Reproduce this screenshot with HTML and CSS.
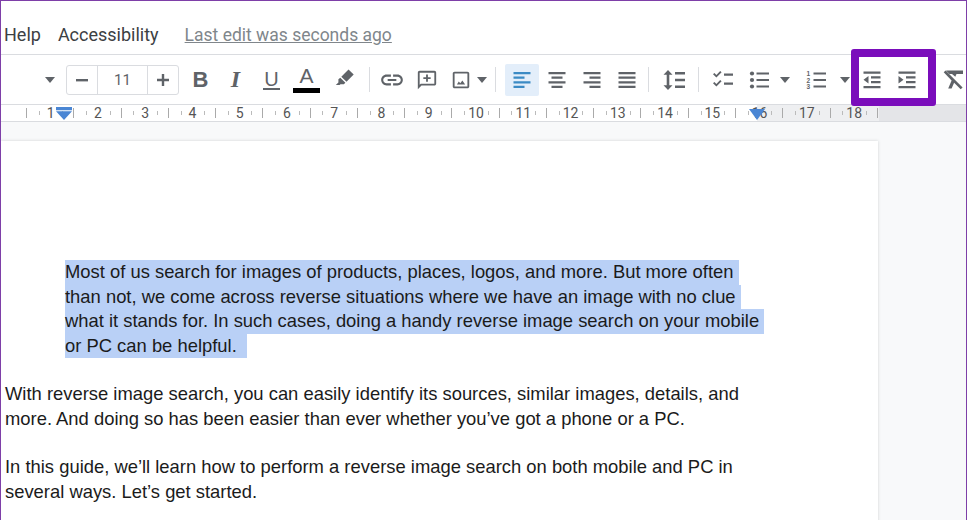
FILE: index.html
```html
<!DOCTYPE html>
<html>
<head>
    <title>Document editor</title>
    <link rel="stylesheet" href="styles.css">
</head>
<body>
    <div class="frame">
        <div class="menu-bar">
            <span class="menu-item">Help</span>
            <span class="menu-item">Accessibility</span>
            <span class="last-edit">Last edit was seconds ago</span>
        </div>

        <div class="toolbar">
            <span class="caret caret-font"></span>
            <div class="size-box">
                <span class="size-btn size-minus"><svg width="14" height="14" viewBox="0 0 14 14"><rect x="1" y="6" width="12" height="2.4"/></svg></span>
                <span class="size-value">11</span>
                <span class="size-btn size-plus"><svg width="14" height="14" viewBox="0 0 14 14"><path d="M1 5.8h4.8V1h2.4v4.8H13v2.4H8.200v4.800H5.800V8.200H1z"/></svg></span>
            </div>
            <span class="tool t-bold">B</span>
            <span class="tool t-italic">I</span>
            <span class="tool t-under"><span class="u-letter">U</span></span>
            <span class="tool t-color"><span class="a-letter">A</span><span class="a-bar"></span></span>
            <span class="tool t-marker"><svg width="20" height="20" viewBox="0 0 20 20"><path d="M13.500 1.500l5.200 5-7.200 7.300-5.200-5.100zM5.300 9.700l5.100 5-1.600 1.500H5.500l-.9.900-3.800-.1 2.600-2.600v-3.100z"/></svg></span>
            <span class="divider d1"></span>
            <span class="tool t-link"><svg width="26" height="26" viewBox="0 0 24 24"><path d="M3.900 12c0-1.710 1.390-3.100 3.100-3.100h4V7H7c-2.760 0-5 2.240-5 5s2.240 5 5 5h4v-1.900H7c-1.710 0-3.100-1.390-3.100-3.100zM8 13h8v-2H8v2zm9-6h-4v1.900h4c1.710 0 3.100 1.390 3.100 3.100s-1.390 3.100-3.100 3.100h-4V17h4c2.760 0 5-2.240 5-5s-2.240-5-5-5z"/></svg></span>
            <span class="tool t-comment"><svg width="22" height="22" viewBox="0 0 24 24"><path d="M2 4c0-1.100.9-2 2-2h16c1.100 0 2 .9 2 2v12c0 1.100-.9 2-2 2H6l-4 4zm2 0v13.170L5.170 16H20V4zm9 10h-2v-3H8V9h3V6h2v3h3v2h-3z"/></svg></span>
            <span class="tool t-image"><svg width="22" height="22" viewBox="0 0 24 24"><path d="M19 5v14H5V5h14m0-2H5c-1.100 0-2 .9-2 2v14c0 1.100.9 2 2 2h14c1.100 0 2-.9 2-2V5c0-1.100-.9-2-2-2zm-5.500 9.500l-2.300 3-1.600-1.900L7.500 17h9z"/></svg></span>
            <span class="caret caret-image"></span>
            <span class="divider d2"></span>
            <span class="tool t-align active"><svg width="20" height="20" viewBox="0 0 20 20"><path d="M1.500 2h17v2.200h-17zM1.500 6.600h11v2.200h-11zM1.500 11.200h17v2.200h-17zM1.500 15.800h11v2.200h-11z"/></svg></span>
            <span class="tool t-align"><svg width="20" height="20" viewBox="0 0 20 20"><path d="M1.500 2h17v2.200h-17zM4.500 6.600h11v2.200h-11zM1.500 11.200h17v2.200h-17zM4.500 15.800h11v2.200h-11z"/></svg></span>
            <span class="tool t-align"><svg width="20" height="20" viewBox="0 0 20 20"><path d="M1.500 2h17v2.200h-17zM7.500 6.600h11v2.200h-11zM1.500 11.200h17v2.200h-17zM7.500 15.800h11v2.200h-11z"/></svg></span>
            <span class="tool t-align"><svg width="20" height="20" viewBox="0 0 20 20"><path d="M1.500 2h17v2.200h-17zM1.500 6.600h17v2.200h-17zM1.500 11.200h17v2.200h-17zM1.500 15.800h17v2.200h-17z"/></svg></span>
            <span class="divider d3"></span>
            <span class="tool t-spacing"><svg width="24" height="24" viewBox="0 0 24 24"><path d="M6 2l4.500 4.800H7.300v10.400h3.200L6 22l-4.500-4.800h3.200V6.800H1.500zM13 4h10v2.400H13zM13 10.800h10v2.400H13zM13 17.600h10V20H13z"/></svg></span>
            <span class="divider d4"></span>
            <span class="tool t-check"><svg width="22" height="20" viewBox="0 0 22 20"><path d="M1 4.200l1.400-1.300 2 2L8.200 1l1.400 1.300-5.200 5.300zM1 13.200l1.400-1.300 2 2L8.200 10l1.400 1.300-5.200 5.300zM12 3.500h9v2.200h-9zM12 12.500h9v2.200h-9z"/></svg></span>
            <span class="tool t-bullets"><svg width="22" height="20" viewBox="0 0 22 20"><circle cx="3" cy="3.500" r="2.100"/><circle cx="3" cy="10" r="2.100"/><circle cx="3" cy="16.500" r="2.100"/><path d="M7.500 2.400H20v2.200H7.500zM7.500 8.900H20v2.200H7.500zM7.500 15.400H20v2.200H7.500z"/></svg></span>
            <span class="caret caret-bullets"></span>
            <span class="tool t-numbers"><svg width="22" height="20" viewBox="0 0 22 20"><text x="0.500" y="6" class="list-num">1</text><text x="0.500" y="12.500" class="list-num">2</text><text x="0.500" y="19" class="list-num">3</text><path d="M7.500 2.400H20v2.200H7.500zM7.500 8.900H20v2.200H7.500zM7.500 15.400H20v2.200H7.500z"/></svg></span>
            <span class="caret caret-numbers"></span>
            <span class="tool t-outdent"><svg width="20" height="20" viewBox="0 0 20 20"><path d="M1.500 1.500h17v2.200h-17zM9 6.200h9.500v2.200H9zM9 11h9.500v2.200H9zM1.500 16h17v2.200h-17zM6.500 6v7.500L1.500 9.800z"/></svg></span>
            <span class="tool t-indent"><svg width="20" height="20" viewBox="0 0 20 20"><path d="M1.500 1.500h17v2.200h-17zM9 6.200h9.500v2.200H9zM9 11h9.500v2.200H9zM1.500 16h17v2.200h-17zM1.500 6v7.500l5-3.700z"/></svg></span>
            <span class="tool t-clear"><svg width="22" height="22" viewBox="0 0 22 22"><path d="M4 1.500h17v3.400h-6.500l-1.200 2.900-3.300-2.900H7.500zM1.700 3.300L3.600 1.400l17 17-1.900 1.900-6.600-6.600-2.500 5.800H6.200l3.400-8z"/></svg></span>
        </div>

        <div class="ruler">
            <span class="ruler-grey"></span>
            <div class="ruler-ticks">
                <span>1</span><span>2</span><span>3</span><span>4</span><span>5</span><span>6</span>
                <span>7</span><span>8</span><span>9</span><span>10</span><span>11</span><span>12</span>
                <span>13</span><span>14</span><span>15</span><span>16</span><span>17</span><span>18</span>
            </div>
            <span class="marker-left"></span>
            <span class="marker-right"></span>
        </div>

        <div class="canvas">
            <div class="page">
                <p class="selected-para">
                    <span class="sel">Most of us search for images of products, places, logos, and more. But more often </span>
                    <span class="sel">than not, we come across reverse situations where we have an image with no clue </span>
                    <span class="sel">what it stands for. In such cases, doing a handy reverse image search on your mobile </span>
                    <span class="sel">or PC can be helpful.  </span>
                </p>
                <p>With reverse image search, you can easily identify its sources, similar images, details, and<br>more. And doing so has been easier than ever whether you’ve got a phone or a PC.</p>
                <p>In this guide, we’ll learn how to perform a reverse image search on both mobile and PC in<br>several ways. Let’s get started.</p>
            </div>
        </div>

        <div class="callout"></div>
    </div>
</body>
</html>
```

FILE: styles.css
```css
html, body {
    margin: 0;
    padding: 0;
}

body {
    font-family: "Liberation Sans", Arial, sans-serif;
    background-color: #fff;
}

.frame {
    position: relative;
    box-sizing: border-box;
    width: 967px;
    height: 520px;
    border: 1px solid #7e3fa8;
    border-bottom: none;
    overflow: hidden;
    display: flex;
    flex-direction: column;
}

/* menu row */
.menu-bar {
    box-sizing: border-box;
    height: 54px;
    flex: none;
    padding: 22px 0 0 3px;
    display: flex;
    align-items: flex-start;
    font-family: Roboto, sans-serif;
    font-size: 18px;
    line-height: 24px;
    color: #3c4043;
    border-bottom: 1px solid #dadce0;
}

.menu-item {
    margin-right: 17px;
}

.last-edit {
    margin-left: 9px;
    font-size: 17.500px;
    color: #80868b;
    text-decoration: underline;
}

/* toolbar */
.toolbar {
    flex: none;
    height: 49px;
    display: flex;
    align-items: center;
    padding-left: 44px;
    color: #5f6368;
    fill: #5f6368;
}

.tool {
    flex: none;
    width: 35px;
    height: 32px;
    display: flex;
    align-items: center;
    justify-content: center;
}

.caret {
    flex: none;
    width: 0;
    height: 0;
    border-left: 5.5px solid transparent;
    border-right: 5.5px solid transparent;
    border-top: 6px solid #5f6368;
}

.caret-font {
    margin-right: 11px;
}

.size-box {
    flex: none;
    box-sizing: border-box;
    width: 113px;
    height: 30px;
    display: flex;
    border: 1px solid #dadce0;
    border-radius: 3px;
    margin-right: 4px;
}

.size-btn {
    width: 30px;
    display: flex;
    align-items: center;
    justify-content: center;
}

.size-value {
    flex: 1;
    text-align: center;
    font-family: Roboto, sans-serif;
    font-size: 15px;
    line-height: 29px;
    border-left: 1px solid #dadce0;
    border-right: 1px solid #dadce0;
}

.t-bold {
    font-weight: bold;
    font-size: 22px;
}

.t-italic {
    font-family: "Liberation Serif", serif;
    font-weight: bold;
    font-style: italic;
    font-size: 24px;
}

.t-under {
    font-size: 20px;
    margin-left: 1px;
}

.u-letter {
    line-height: 18px;
    padding: 0 1px;
    border-bottom: 2px solid #5f6368;
}

.t-color {
    flex-direction: column;
    font-size: 21px;
}

.a-letter {
    line-height: 20px;
}

.a-bar {
    width: 27px;
    height: 5px;
    margin-top: 2px;
    background-color: #000;
}

.t-marker {
    margin: -4px 0 0 3px;
}

.divider {
    flex: none;
    width: 1px;
    height: 25px;
    background-color: #dadce0;
}

.d1 {
    margin: 0 4px 0 7px;
}

.d2 {
    margin: 0 9px 0 8px;
}

.d3 {
    margin: 0 7px 0 4px;
}

.d4 {
    margin: 0 6px 0 6px;
}

.t-image {
    margin-left: -1px;
}

.caret-image {
    margin-left: -1px;
}

.t-align {
    height: 32px;
    border-radius: 2px;
}

.t-align.active {
    width: 34px;
    background-color: #e3eefa;
    fill: #3b8ac4;
}

.t-spacing {
    width: 36px;
}

.t-check {
    width: 35px;
}

.t-bullets {
    width: 36px;
    margin-left: 2px;
}

.caret-bullets {
    margin: 0 13px 0 2px;
}

.t-numbers {
    width: 34px;
    margin-left: -3px;
}

.caret-numbers {
    margin: 0 2px 0 6px;
}

.list-num {
    font-size: 6.500px;
    font-weight: bold;
    font-family: "Liberation Sans", sans-serif;
}

.t-outdent {
    margin-left: 2px;
}

.t-clear {
    margin-left: 11px;
}

/* ruler */
.ruler {
    position: relative;
    box-sizing: border-box;
    flex: none;
    height: 18px;
    background-color: #fff;
    border-top: 1px solid #dadce0;
    border-bottom: 1px solid #dadce0;
    overflow: hidden;
}

.ruler-grey {
    position: absolute;
    left: 756px;
    right: 0;
    top: 0;
    bottom: 0;
    background: linear-gradient(to right, #eeeff1 0, #eeeff1 122px, #e4e5e8 122px);
}

.ruler-ticks {
    position: relative;
    display: flex;
    height: 100%;
    padding-left: 26px;
    font-family: Roboto, sans-serif;
    font-size: 14px;
    line-height: 16px;
    color: #555;
    background: linear-gradient(#aaa, #aaa) no-repeat 25px 3px / 1px 10px;
}

.ruler-ticks span {
    flex: none;
    width: 47.270px;
    text-align: center;
    background-image:
        linear-gradient(#aaa, #aaa),
        linear-gradient(#bbb, #bbb),
        linear-gradient(#bbb, #bbb);
    background-repeat: no-repeat;
    background-size: 1px 10px, 1px 4px, 1px 4px;
    background-position: right 3px, 11.800px 6px, 35.400px 6px;
}

.marker-left {
    position: absolute;
    left: 55px;
    top: 2px;
    width: 16px;
    height: 13px;
    background-color: #4a86d4;
    clip-path: polygon(0 0, 100% 0, 100% 25%, 0 25%, 0 33%, 100% 33%, 50% 100%, 0 33%);
}

.marker-right {
    position: absolute;
    left: 748px;
    top: 4px;
    width: 16px;
    height: 11px;
    background-color: #4a86d4;
    clip-path: polygon(0 0, 100% 0, 50% 100%);
}

/* document */
.canvas {
    flex: 1;
    min-height: 0;
    background-color: #f8f9fa;
    padding-top: 19px;
}

.page {
    box-sizing: border-box;
    width: 877px;
    height: 500px;
    padding: 119px 0 0 4px;
    background-color: #fff;
    box-shadow: 0 0 3px rgba(60, 64, 67, 0.2);
    font-size: 18.400px;
    line-height: 24.500px;
    color: #1b1b1b;
}

.page p {
    margin: 0 0 24px;
}

.selected-para {
    padding-left: 60px;
}

.sel {
    display: block;
    width: fit-content;
    white-space: pre;
    background-color: #b9d0f6;
}

/* purple box drawn over the screenshot */
.callout {
    position: absolute;
    left: 850px;
    top: 48px;
    box-sizing: border-box;
    width: 85px;
    height: 57px;
    border: 8px solid #7a0dbb;
    border-radius: 3px;
}
```
